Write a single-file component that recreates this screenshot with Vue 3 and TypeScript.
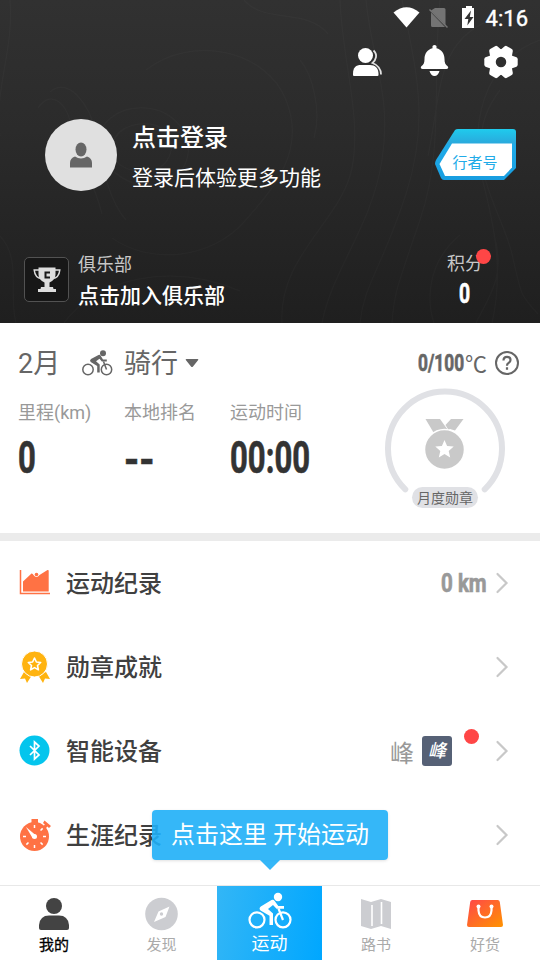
<script setup lang="ts">
interface Stat {
  label: string
  value: string
  empty?: boolean
}

interface MenuRow {
  icon: 'chart' | 'award' | 'bluetooth' | 'watch'
  title: string
  value?: string
  device?: string
}

const stats: Stat[] = [
  { label: '里程(km)', value: '0' },
  { label: '本地排名', value: '--', empty: true },
  { label: '运动时间', value: '00:00' },
]

const rows: MenuRow[] = [
  { icon: 'chart', title: '运动纪录', value: '0 km' },
  { icon: 'award', title: '勋章成就' },
  { icon: 'bluetooth', title: '智能设备', device: '峰' },
  { icon: 'watch', title: '生涯纪录' },
]

const ticks: number[] = [0, 45, 90, 135, 180, 225, 270]
const teeth: number[] = [30, 90, 150, 210, 270, 330]
</script>

<template>
  <div class="screen">
    <header class="hero">
      <svg class="contours" viewBox="0 0 540 323" fill="none" stroke="#fff" stroke-opacity=".02" stroke-width="1.5">
        <path d="M38 108C52 88 68 104 72 130S94 180 102 214M50 92c18-16 40 12 46 42s12 66 30 86M98 152c-4-30 22-46 48-44s50 26 40 54-60 38-88-10zM112 150c0-20 20-28 38-26s28 22 16 38-52 12-54-12z" />
        <path d="M0 236c22 24 8 56 16 87M64 323c32-44 106-62 176-32M112 238c40 28 100 20 132-16s62-72 42-122-94-66-140-30M340 0c2 60 22 116 12 168s-74 88-70 155M366 0c6 62 26 94 16 160s-50 110-60 163M402 0c14 70 28 120 4 194s-42 90-46 129" />
        <path d="M440 0c-8 84 4 150-20 220s-26 74-28 103M496 18c-60 20-54 70-68 138M540 40c-60 22-70 92-58 138s22 92 10 145M500 90c-46 60 2 120 12 164s8 40 26 60M494 235c12 40-4 60-18 88M460 235c-36 30-32 70-26 88M300 60c12 14 22 50 14 78M244 0c20 24 64 8 84 34M10 0c4 52-16 88-10 136" />
      </svg>

      <div class="status">
        <svg width="84" height="24" viewBox="389 6 84 24">
          <path fill="#fff" d="M392.500 12.500Q405.500 2 418.500 12.500L405.500 27.500Z" />
          <path fill="#747474" d="M434 8h9q1.500 0 1.500 1.500V25l-14.500-14.500zM430 12.500L444 27h-12.500q-1.500 0-1.500-1.500z" />
          <path stroke="#747474" stroke-width="1.500" d="M428.500 9.500l18 18" />
          <path fill="#fff" d="M461 8h4V6h6v2h4v20h-14z" />
          <path fill="#333" d="M470 10.500l-6.500 8.500h3.800l-1 6.500 6.200-8.500h-3.700z" />
        </svg>
        <span class="clock">4:16</span>
      </div>

      <nav class="tools">
        <svg width="32" height="32" viewBox="352 46 32 32">
          <g fill="#fff"><circle cx="365.500" cy="55.500" r="7.500" /><path d="M353 75v-1.500c0-6 3-8.500 8-8.500h9c5 0 8.500 3 8.500 9V75q0 1-1 1H354q-1 0-1-1z" /></g>
          <path fill="none" stroke="#e2e2e2" stroke-width="1.800" d="M373.500 50.500c4.500 4 2.500 9.500-1 12.500 5 2 8.500 5 8.500 11.500" />
        </svg>
        <svg width="32" height="34" viewBox="418 45 32 34">
          <path fill="#fff" d="M432.500 46q2-2 4 0v2.200c5 1.300 8 5.200 8 10.800 0 3.500.8 5.800 3.200 7.200q1.500 2.800-1.200 2.800h-24q-2.700 0-1.200-2.800c2.400-1.400 3.200-3.700 3.200-7.200 0-5.600 3-9.500 8-10.800zM429.500 71h10q-1.500 5-5 5t-5-5z" />
        </svg>
        <svg width="36" height="36" viewBox="0 0 36 36">
          <circle cx="18" cy="18" r="9" fill="none" stroke="#fff" stroke-width="7.500" />
          <path v-for="t in teeth" :key="t" fill="#fff" d="M11.500 7.500L13.300 2.500Q14 1.300 15.200 1.300h5.600q1.200 0 1.900 1.200L24.500 7.500z" :transform="`rotate(${t} 18 18)`" />
        </svg>
      </nav>

      <section class="profile">
        <div class="avatar">
          <svg width="24" height="27" viewBox="0 0 24 27" fill="#666">
            <ellipse cx="12" cy="7.500" rx="5.500" ry="7" /><path d="M1 25.500V21q0-5 5-6.500 6 4 12 0 5 1.500 5 6.500v4.500z" />
          </svg>
        </div>
        <div class="who">
          <div class="login">点击登录</div>
          <div class="hint">登录后体验更多功能</div>
        </div>
        <div class="badge">
          <svg viewBox="0 0 82 52">
            <defs><linearGradient id="cyan" x2="0" y2="1"><stop stop-color="#1fcbed" /><stop offset=".28" stop-color="#2aa9dc" /><stop offset=".3" stop-color="#20ace9" /><stop offset="1" stop-color="#179de0" /></linearGradient></defs>
            <path fill="url(#cyan)" d="M20 1q1-1 3-1h55q3 0 3 3v36L69 51H9q-2 0-3-2L0 35q0-2 1-4z" />
            <path fill="#fff" d="M17 14.500h60v24L69 47H10L4.500 35z" />
          </svg>
          <span>行者号</span>
        </div>
      </section>

      <section class="club">
        <div class="cup">
          <svg width="28" height="26" viewBox="0 0 28 26">
            <path fill="none" stroke="#ddd" stroke-width="1.500" d="M7 3H1.200q.8 8 7.300 8.500M21 3h5.800q-.8 8-7.300 8.500" />
            <path fill="#ddd" d="M5.500.5h17v7q0 5.500-6 8v4.500h3.500l.5 2H23v3H5v-3h2.500l.5-2h3.500v-4.500q-6-2.500-6-8z" />
            <path fill="none" stroke="#181818" stroke-width="2" d="M17 5.500h-4.500v5H17" />
          </svg>
        </div>
        <div class="club-text">
          <div class="club-label">俱乐部</div>
          <div class="club-join">点击加入俱乐部</div>
        </div>
        <div class="points">
          <div class="points-label">积分<i class="dot"></i></div>
          <div class="points-value"><span class="num">0</span></div>
        </div>
      </section>
    </header>

    <section class="month">
      <div class="left">
        <div class="picker">
          <span class="when">2月</span>
          <svg class="rider" width="32" height="28" viewBox="0 0 32 28" fill="none" stroke="#666">
            <g stroke-width="1.500"><circle cx="7" cy="20.500" r="5.200" /><circle cx="25.500" cy="20.500" r="5.200" /></g>
            <circle cx="22" cy="4.300" r="3" fill="#666" stroke="none" />
            <path fill="#666" stroke="none" d="M17.500 6q1.500-.5 2.200.8l2.300 3.700h3.800v2h-5l-2.300-2.800-3.500 2.600 3.700 3.200v8h-2.500v-6.500l-6.500-4q-1.500-1.500.3-3z" />
            <path stroke-width="1.500" d="M22.500 12.500l3 8" />
          </svg>
          <span class="sport">骑行</span>
          <svg class="caret" width="14" height="10" viewBox="0 0 14 10"><path fill="#666" d="M1.500 1h11q1.500 0 .5 1.200L8 8.500q-1 1-2 0L1 2.200Q0 1 1.500 1z" /></svg>
        </div>
        <div class="stats">
          <div v-for="s in stats" :key="s.label" class="stat">
            <div class="stat-label">{{ s.label }}</div>
            <div class="stat-value"><span class="num" :class="{ empty: s.empty }">{{ s.value }}</span></div>
          </div>
        </div>
      </div>
      <div class="right">
        <div class="goal">
          <span class="goal-box"><span class="num goal-num">0/100</span></span><span class="unit">℃</span>
          <svg width="26" height="26" viewBox="0 0 26 26" fill="none" stroke="#666" stroke-width="2">
            <circle cx="13" cy="13" r="11" /><path stroke-width="2.200" d="M9.500 10.500q0-3.700 3.500-3.700t3.500 3.200q0 1.700-1.800 2.900T13 15.700M13 17.300v2.400" />
          </svg>
        </div>
        <div class="medal">
          <svg width="120" height="120" viewBox="0 0 120 120">
            <path d="M20.300 101.300A57 57 0 1 1 99.700 101.300" fill="none" stroke="#e0e1e5" stroke-width="6" stroke-linecap="round" />
            <g fill="#c9c9c9"><path d="M40.500 31h14.500l7.500 10.500-5 1-9 2zM60.500 37l5.500-6h12.500l-8.500 11.500-5-1.500-1.500 1z" /><circle cx="59.500" cy="61.500" r="20" stroke="#fff" stroke-width="1.500" /></g>
            <path fill="#fff" d="M59.500 52l2.600 6 6.600.6-5 4.400 1.500 6.500-5.700-3.400-5.700 3.400 1.500-6.500-5-4.400 6.600-.6z" />
          </svg>
          <span class="pill">月度勋章</span>
        </div>
      </div>
    </section>

    <main class="list">
      <div v-for="row in rows" :key="row.title" class="row">
        <svg class="row-icon" width="32" height="34" viewBox="0 0 32 34">
          <template v-if="row.icon === 'chart'">
            <path fill="none" stroke="#ff7244" stroke-width="1.500" d="M1.500 4v23.500H31" />
            <path fill="#ff7244" d="M4 25.500V15.500L12.500 7.500q1.200-.3 2 1.500 3 4 6 0L28.500 4q1.200-.5 1.200 1v20.500z" /><circle cx="17.500" cy="8.500" r="1.800" fill="#ff7244" />
          </template>
          <template v-else-if="row.icon === 'award'">
            <path fill="#ffb30f" d="M5 22l-4 7 5-.5L8 33l5-8zM27 22l4 7-5-.5-2 4.500-5-8z" />
            <circle cx="15.500" cy="14" r="13" fill="#ffb30f" stroke="#fff" stroke-width="1" />
            <path fill="none" stroke="#fff" stroke-width="1.600" stroke-linejoin="round" d="M15.500 8l1.900 4 4.300.5-3.200 3 .9 4.300-3.900-2.200-3.900 2.200.9-4.300-3.200-3 4.300-.5z" />
          </template>
          <template v-else-if="row.icon === 'bluetooth'">
            <circle cx="15.500" cy="16.500" r="15" fill="#04c5ed" />
            <path fill="none" stroke="#fff" stroke-width="1.700" d="M11 12l9 9-4.500 4V8l4.500 4-9 9" />
          </template>
          <template v-else>
            <circle cx="15.500" cy="18.500" r="14.500" fill="#ff7244" />
            <path fill="#ff7244" d="M12.500 1H19v5h-6.500zM25.500 2.500L32 8l-2 2-1.700-1.500-2 2.500-2.500-2 2-2.500L24 5z" />
            <g stroke="#fff" stroke-width="1.500"><path v-for="t in ticks" :key="t" d="M15.500 7v3" :transform="`rotate(${t} 15.500 18.500)`" /></g>
            <path fill="#fff" d="M7 9l9.500 8-3 3z" /><circle cx="15.500" cy="18.500" r="2.500" fill="#fff" />
          </template>
        </svg>
        <span class="title">{{ row.title }}</span>
        <span v-if="row.value" class="value"><span class="num">{{ row.value }}</span></span>
        <span v-if="row.device" class="device">{{ row.device }}<b class="chip">{{ row.device }}</b><i class="dot"></i></span>
        <svg class="chevron" width="14" height="24" viewBox="0 0 14 24"><path d="M2.500 3l9 9-9 9" fill="none" stroke="#c8c8c8" stroke-width="2.200" stroke-linecap="round" /></svg>
      </div>
    </main>

    <footer class="tabs">
      <div class="tab current">
        <svg width="32" height="34" viewBox="0 0 32 34" fill="#434343"><circle cx="16" cy="9" r="8" /><path d="M1 31v-3q1-9.500 10-9.500h10q9 0 10 9.500v3q0 2-2 2H3q-2 0-2-2z" /></svg>
        <span>我的</span>
      </div>
      <div class="tab">
        <svg width="34" height="34" viewBox="0 0 34 34"><circle cx="16.500" cy="17" r="16.300" fill="#cccdd1" /><path fill="#fff" d="M24.500 9.500l-4 10.500-11.500 5 4.500-10.500zM16.500 15.300a1.700 1.700 0 1 0 0 3.400 1.700 1.700 0 0 0 0-3.400z" fill-rule="evenodd" /></svg>
        <span>发现</span>
      </div>
      <div class="tab go">
        <svg width="44" height="38" viewBox="0 0 44 38" fill="none" stroke="#fff">
          <g stroke-width="2.200"><circle cx="9" cy="27.800" r="7.500" /><circle cx="35" cy="27.800" r="7.500" /></g>
          <circle cx="30" cy="5" r="4.200" fill="#fff" stroke="none" />
          <path fill="#fff" stroke="none" d="M23.500 8q2-.8 3.200 1l3.600 5H36v2.800h-7.500L25 13l-5 4 5 4.500V33h-3.500v-9.300l-9-5.200q-2-2 .3-4z" />
          <path stroke-width="2.200" d="M30.500 16.500L35 28" />
        </svg>
        <span>运动</span>
      </div>
      <div class="tab">
        <svg width="32" height="34" viewBox="0 0 32 34"><path fill="#cccdd1" d="M1 2l10 3 10-3 10 3v27l-10-3-10 3-10-3z" /><path stroke="#fff" stroke-width="1.600" d="M12 8v21M21.500 5v22" /></svg>
        <span>路书</span>
      </div>
      <div class="tab">
        <svg width="36" height="34" viewBox="0 0 36 34">
          <defs><linearGradient id="bag" x2="1" y2="1"><stop stop-color="#ff464a" /><stop offset="1" stop-color="#ff9300" /></linearGradient></defs>
          <path fill="url(#bag)" d="M3.200 5q.2-2 2.200-2h25.200q2 0 2.200 2L36 28q0 2-2 2H2q-2 0-2-2z" /><path fill="none" stroke="#fff" stroke-width="2.200" d="M11.500 10v3.500q.5 7 6.500 7t6.500-7V10" /><g fill="#fff"><circle cx="11.500" cy="9.500" r="2" /><circle cx="24.500" cy="9.500" r="2" /></g>
        </svg>
        <span>好货</span>
      </div>
    </footer>

    <div class="tip">点击这里 开始运动</div>
  </div>
</template>

<style>
body {
  overflow: hidden;
}
</style>

<style scoped>
.screen {
  position: relative;
  display: flex;
  flex-direction: column;
  width: 540px;
  height: 960px;
  overflow: hidden;
  background: #fff;
  font-family: Roboto, "Noto Sans CJK SC", sans-serif;
  color: #666;
}
svg {
  display: block;
  flex: none;
}
.num {
  display: inline-block;
  font-weight: 700;
  transform: scaleX(0.69);
  transform-origin: 0 50%;
  -webkit-text-stroke: 0.7px currentColor;
}
.num.empty {
  transform: translateY(2px) scaleX(0.86);
}
.dot {
  position: absolute;
  width: 15px;
  height: 15px;
  border-radius: 50%;
  background: #ff4646;
}
.hero {
  position: relative;
  height: 323px;
  flex: none;
  background: linear-gradient(#313131, #2b2b2b 40%, #1f1f1f);
  color: #fff;
}
.contours {
  position: absolute;
  inset: 0;
}
.status {
  position: relative;
  display: flex;
  justify-content: flex-end;
  align-items: center;
  gap: 12px;
  height: 36px;
  padding-right: 12px;
}
.clock {
  font-size: 22px;
  font-weight: 400;
  line-height: 38px;
  padding-top: 2px;
  -webkit-text-stroke: 0.4px #fff;
}
.tools {
  position: relative;
  display: flex;
  justify-content: flex-end;
  align-items: center;
  gap: 34px;
  height: 52px;
  padding-right: 21px;
}
.tools svg:nth-child(-n + 2) {
  margin-right: -1px;
  margin-left: 1px;
}
.profile {
  position: relative;
  display: flex;
  height: 72px;
  margin-top: 31px;
  padding: 0 23px 0 45px;
}
.avatar {
  display: flex;
  align-items: center;
  justify-content: center;
  width: 72px;
  height: 72px;
  border-radius: 50%;
  background: #e0e0e0;
}
.who {
  flex: 1;
  padding-left: 15px;
}
.login {
  font-size: 24px;
  font-weight: 500;
  line-height: 36px;
  padding-top: 1px;
}
.hint {
  font-size: 21px;
  line-height: 30px;
  margin-top: 7px;
}
.badge {
  position: relative;
  width: 82px;
  height: 52px;
  margin-top: 10px;
}
.badge span {
  position: absolute;
  inset: 15px 2px 0 0;
  color: #21abe8;
  font-size: 15px;
  line-height: 38px;
  text-align: center;
}
.club {
  position: relative;
  display: flex;
  margin-top: 58px;
  padding: 0 24px;
}
.cup {
  display: flex;
  align-items: center;
  justify-content: center;
  box-sizing: border-box;
  width: 45px;
  height: 45px;
  margin-top: 8px;
  border: 1.5px solid #525252;
  border-radius: 5px;
  background: #171717;
}
.club-text {
  flex: 1;
  padding: 1px 0 0 9px;
}
.club-label,
.points-label {
  color: #c8c8c8;
  font-size: 18px;
  line-height: 30px;
}
.club-join {
  font-size: 21px;
  font-weight: 500;
  line-height: 32px;
}
.points {
  width: 69px;
}
.points-label {
  position: relative;
}
.points-label .dot {
  left: 29px;
  top: 0;
}
.points-value {
  padding-left: 12px;
  font-size: 28px;
  line-height: 30px;
}
.month {
  display: flex;
  height: 210px;
  flex: none;
  border-bottom: 8px solid #ebebeb;
}
.left {
  width: 375px;
  padding: 21px 0 0 18px;
  box-sizing: border-box;
}
.picker {
  display: flex;
  align-items: center;
  height: 40px;
  font-size: 27px;
  line-height: 40px;
}
.when {
  width: 63px;
}
.rider {
  margin-top: -2px;
}
.sport {
  margin-left: 11px;
}
.caret {
  margin: -2px 0 0 7px;
}
.stats {
  display: grid;
  grid-template-columns: 106px 106px 110px;
  margin-top: 13px;
}
.stat-label {
  color: #999;
  font-size: 18px;
  line-height: 32px;
  white-space: nowrap;
}
.stat-value {
  color: #333;
  font-size: 45px;
  line-height: 58px;
  height: 58px;
}
.right {
  flex: 1;
  padding: 26px 20px 0 10px;
}
.goal {
  display: flex;
  align-items: center;
  justify-content: flex-end;
  height: 28px;
  font-size: 24px;
  line-height: 28px;
}
.goal-box {
  width: 47px;
}
.goal-num {
  transform: scaleX(0.72);
}
.unit {
  width: 22px;
  margin: -2px 7px 0 0;
  font-family: "Noto Sans CJK SC", sans-serif;
  font-size: 22px;
}
.medal {
  position: relative;
  display: flex;
  width: 120px;
  height: 120px;
  margin-top: 11px;
}
.pill {
  position: absolute;
  left: 27px;
  top: 99px;
  width: 66px;
  height: 21px;
  border-radius: 11px;
  background: #e0e1e5;
  font-size: 14px;
  line-height: 23px;
  text-align: center;
}
.list {
  flex: 1;
  min-height: 0;
  overflow: hidden;
}
.row {
  display: flex;
  align-items: center;
  height: 84px;
  padding: 0 31px 0 19px;
}
.title {
  flex: 1;
  padding: 2px 0 0 15px;
  color: #404040;
  font-size: 24px;
  font-weight: 500;
  line-height: 36px;
}
.value {
  width: 47px;
  margin-right: 7px;
  color: #999;
  font-size: 26px;
  line-height: 36px;
  white-space: nowrap;
}
.value .num {
  transform: scaleX(0.79);
}
.device {
  position: relative;
  display: flex;
  align-items: center;
  width: 105px;
  color: #999;
  font-size: 24px;
}
.chip {
  width: 30px;
  margin-left: 8px;
  border-radius: 3px;
  background: #566176;
  color: #fff;
  font-size: 18px;
  font-style: italic;
  font-weight: 500;
  line-height: 30px;
  text-align: center;
}
.device .dot {
  left: 74px;
  top: -5px;
}
.tabs {
  display: grid;
  grid-template-columns: 108px 109px 105px 108px 110px;
  height: 75px;
  flex: none;
  box-sizing: border-box;
  border-top: 1px solid #e8e8e8;
}
.tab {
  display: flex;
  flex-direction: column;
  align-items: center;
  padding-top: 11px;
  color: #aaa;
  font-size: 15px;
  line-height: 24px;
}
.tab:nth-child(2) {
  padding-right: 2px;
}
.tab span {
  margin-top: 2px;
}
.current {
  color: #000;
}
.current span {
  -webkit-text-stroke: 0.3px #000;
}
.go {
  padding-top: 6px;
  background: linear-gradient(100deg, #33b6f6, #00a7ff);
  color: #fff;
  font-size: 18px;
}
.tip {
  position: absolute;
  left: 152px;
  top: 810px;
  width: 236px;
  height: 50px;
  border-radius: 4px;
  background: rgba(31, 175, 247, 0.9);
  box-shadow: 0 1px 3px rgba(0, 0, 0, 0.12);
  color: #fff;
  font-size: 24px;
  line-height: 51px;
  text-align: center;
}
.tip::after {
  content: "";
  position: absolute;
  left: 108px;
  top: 50px;
  border: 10px solid transparent;
  border-top-color: rgba(31, 175, 247, 0.9);
  border-bottom: 0;
}
</style>
